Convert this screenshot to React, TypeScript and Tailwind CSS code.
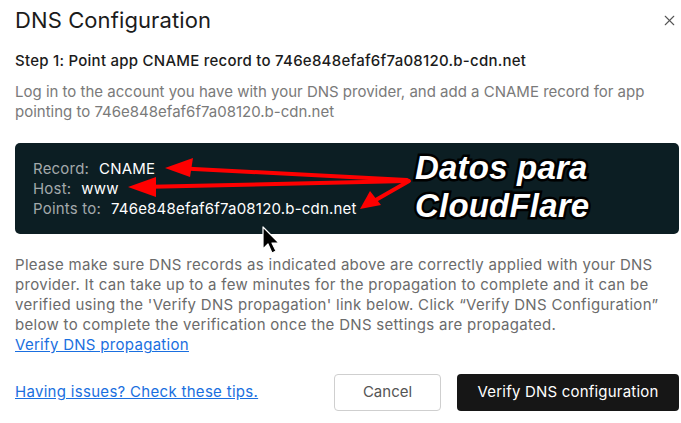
import React from 'react';
import { X } from 'lucide-react';

const Arrows: React.FC = () => (
    <svg className="absolute inset-0 pointer-events-none" width="664" height="91" viewBox="0 0 664 91">
        <g fill="#ff0000" stroke="#ff0000" strokeLinecap="round">
            <line x1="392" y1="37" x2="160" y2="25" strokeWidth="4" />
            <polygon points="150,25 178,15 175,34" stroke="none" />
            <line x1="392" y1="38" x2="125" y2="44" strokeWidth="4" />
            <polygon points="113,44 141,34 141,54" stroke="none" />
            <line x1="394" y1="38" x2="352" y2="62" strokeWidth="4" />
            <polygon points="345,66 355,48 366,62" stroke="none" />
        </g>
    </svg>
);

const Cursor: React.FC = () => (
    <svg className="absolute pointer-events-none" style={{ left: 262, top: 226 }} width="20" height="30" viewBox="0 0 20 30">
        <path d="M1 1 L1 23 L6 18 L10 27 L14 25 L10 17 L17 17 Z" fill="#000" stroke="#fff" strokeWidth="1.2" strokeLinejoin="round" />
    </svg>
);

export default function App() {
    return (
        <div className="relative w-[681px] h-[423px] bg-white overflow-hidden pl-[15px] pr-[2px] text-[#1b1b1b]" style={{ fontFamily: 'Inter, "Noto Sans", sans-serif' }}>
            <div className="flex items-center justify-between h-[40px] pr-[1px]">
                <h1 className="text-[22px] font-normal tracking-[0.1px]">DNS Configuration</h1>
                <X size={17} strokeWidth={1.5} className="text-[#555]" />
            </div>

            <p className="mt-[11px] text-[15px] font-medium leading-[20px] tracking-[0.25px]">
                Step 1: Point app CNAME record to 746e848efaf6f7a08120.b-cdn.net
            </p>

            <p className="mt-[11px] text-[15px] leading-[20px] text-[#7a7a7a]">
                Log in to the account you have with your DNS provider, and add a CNAME record for app pointing to 746e848efaf6f7a08120.b-cdn.net
            </p>

            <div className="relative mt-[21px] h-[91px] rounded-[5px] bg-[#0c1e23] pl-[18px] pt-[16px] text-[15px] leading-[20px] tracking-[0.2px]">
                <div className="flex flex-col">
                    <div><span className="text-[#a3a9ab]">Record:</span><span className="ml-[10px] text-white">CNAME</span></div>
                    <div><span className="text-[#a3a9ab]">Host:</span><span className="ml-[10px] text-white">www</span></div>
                    <div><span className="text-[#a3a9ab]">Points to:</span><span className="ml-[10px] text-white">746e848efaf6f7a08120.b-cdn.net</span></div>
                </div>
                <Arrows />
                <div
                    className="absolute left-[400px] top-[6px] text-[33px] leading-[38px] font-bold italic text-white [paint-order:stroke_fill] [-webkit-text-stroke:5px_black]"
                    style={{ fontFamily: '"Liberation Sans", Arial, sans-serif' }}
                >
                    <div>Datos para</div>
                    <div>CloudFlare</div>
                </div>
            </div>

            <p className="mt-[21px] text-[15px] leading-[20px] text-[#6b6b6b] tracking-[0.3px]">
                Please make sure DNS records as indicated above are correctly applied with your DNS provider. It can take up to a few minutes for the propagation to complete and it can be verified using the 'Verify DNS propagation' link below. Click “Verify DNS Configuration” below to complete the verification once the DNS settings are propagated.
            </p>
            <a className="block text-[15px] leading-[20px] text-[#1a6fe0] underline tracking-[0.3px]">Verify DNS propagation</a>

            <div className="mt-[19px] flex items-center">
                <a className="text-[15px] text-[#1a6fe0] underline tracking-[0.3px]">Having issues? Check these tips.</a>
                <div className="ml-auto flex gap-[16px]">
                    <button className="h-[37px] w-[107px] rounded-[4px] border border-[#cfcfcf] bg-white text-[15px] text-[#555]">Cancel</button>
                    <button className="h-[37px] w-[222px] rounded-[4px] bg-[#161616] text-[15px] text-white tracking-[0.2px]">Verify DNS configuration</button>
                </div>
            </div>

            <Cursor />
        </div>
    );
}
